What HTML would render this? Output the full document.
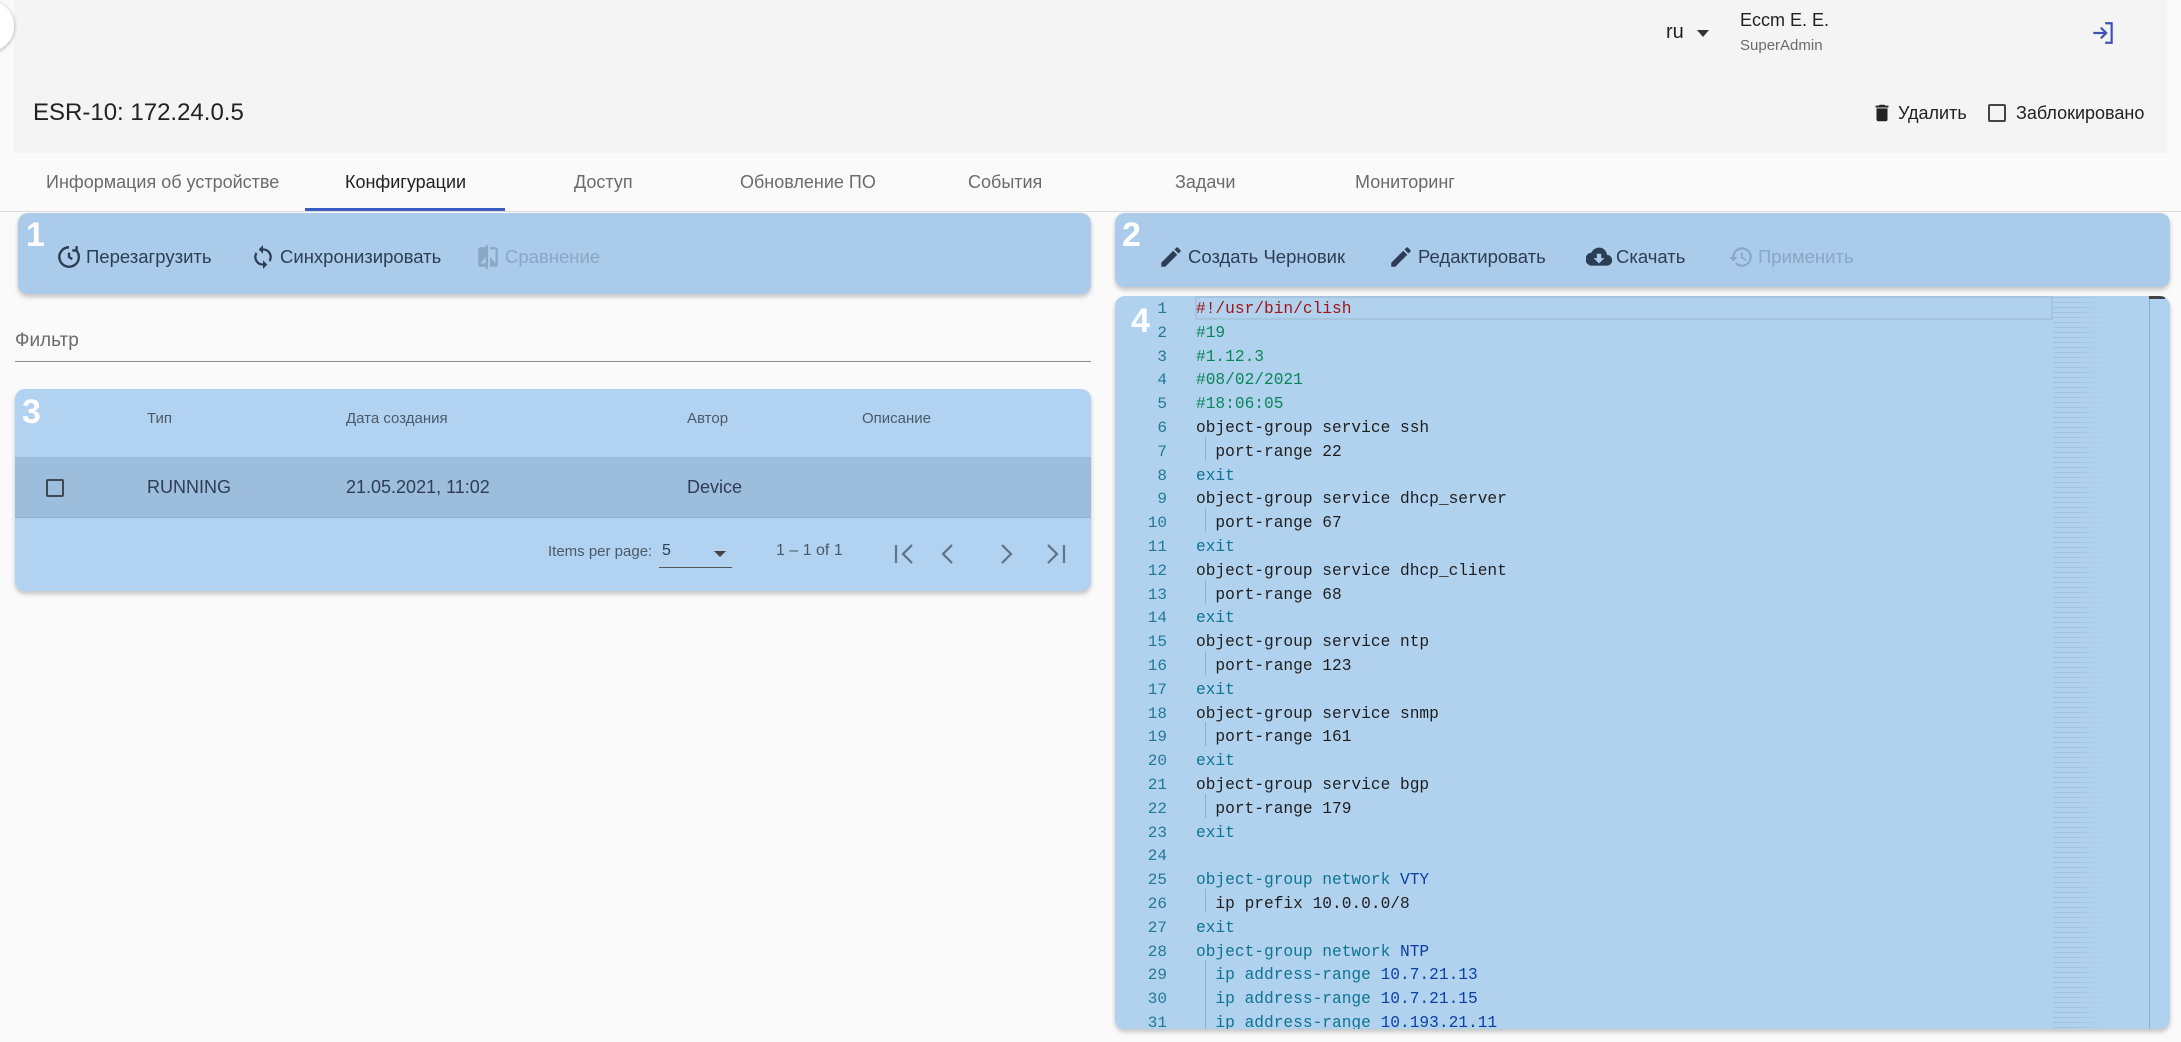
<!DOCTYPE html>
<html><head><meta charset="utf-8"><style>
*{box-sizing:border-box;margin:0;padding:0}
body{width:2181px;height:1042px;background:#fafafa;font-family:"Liberation Sans",sans-serif;position:relative;overflow:hidden;color:#212121}
.abs{position:absolute;white-space:nowrap}
.hdr{position:absolute;left:14px;top:0;width:2153px;height:153px;background:#f4f4f4}
.tab{position:absolute;top:172px;font-size:18px;color:#6b6b6b}
.panel{position:absolute;background:#abcbea;border-radius:10px;box-shadow:0 3px 5px rgba(0,0,0,.22)}
.num{position:absolute;color:#fff;font-weight:bold;font-size:34px;line-height:1}
.btn{position:absolute;top:244px;font-size:18.5px;color:#2c3e55;display:flex;align-items:center;gap:4px}
.btn svg{width:26px;height:26px}
.dis{color:#8aa7c4}
.th{position:absolute;top:410px;font-size:15px;color:#4a5a6a}
.td{position:absolute;top:477px;font-size:18px;color:#2c3e55}
.code{position:absolute;left:1115px;top:296px;width:1055px;height:733px;background:#b1d2ef;border-radius:10px;box-shadow:0 3px 5px rgba(0,0,0,.22);overflow:hidden}
.ln{position:absolute;left:0;width:52px;text-align:right;font-family:"Liberation Mono",monospace;font-size:16px;color:#237893;line-height:24px;margin-top:1px}
.cl{position:absolute;left:81px;font-family:"Liberation Mono",monospace;font-size:16.2px;color:#1e1e1e;white-space:pre;line-height:24px;margin-top:1px}
.g{color:#098658}.t{color:#0e7490}.n{color:#0b3fa0}.r{color:#a31515}
.ig{position:absolute;left:90px;width:1px;height:24px;background:#8fb0cc}
</style></head><body>
<div class="hdr"></div>
<div class="abs" style="left:-38px;top:0;width:52px;height:52px;border-radius:50%;background:#fff;box-shadow:0 1px 4px rgba(0,0,0,.3)"></div>
<div class="abs" style="left:33px;top:99px;font-size:24px;color:#222">ESR-10: 172.24.0.5</div>
<div class="abs" style="left:1666px;top:21px;font-size:20px;color:#222">ru</div>
<div class="abs" style="left:1697px;top:30px;width:0;height:0;border-left:6px solid transparent;border-right:6px solid transparent;border-top:7px solid #333"></div>
<div class="abs" style="left:1740px;top:10px;font-size:18px;color:#222">Еccm Е. Е.</div>
<div class="abs" style="left:1740px;top:37px;font-size:15px;color:#6b6b6b">SuperAdmin</div>
<svg class="abs" style="left:2090px;top:20px" width="26" height="26" viewBox="0 0 24 24"><path d="M10 17l5-5-5-5M15 12H3M14 3h6v18h-6" fill="none" stroke="#3f51b5" stroke-width="2"/></svg>
<svg class="abs" style="left:1871px;top:100px" width="22" height="26" viewBox="0 0 24 24"><path d="M6 19c0 1.1.9 2 2 2h8a2 2 0 002-2V7H6v12zM19 4h-3.5l-1-1h-5l-1 1H5v2h14V4z" fill="#222"/></svg>
<div class="abs" style="left:1898px;top:103px;font-size:18px;color:#222">Удалить</div>
<div class="abs" style="left:1988px;top:104px;width:18px;height:18px;border:2px solid #444;border-radius:2px"></div>
<div class="abs" style="left:2016px;top:103px;font-size:18px;color:#222">Заблокировано</div>

<div class="tab" style="left:46px">Информация об устройстве</div>
<div class="tab" style="left:345px;color:#222">Конфигурации</div>
<div class="tab" style="left:574px">Доступ</div>
<div class="tab" style="left:740px">Обновление ПО</div>
<div class="tab" style="left:968px">События</div>
<div class="tab" style="left:1175px">Задачи</div>
<div class="tab" style="left:1355px">Мониторинг</div>
<div class="abs" style="left:0;top:211px;width:2181px;height:1px;background:#ddd"></div>
<div class="abs" style="left:305px;top:208px;width:200px;height:3px;background:#3b5bc4"></div>

<div class="panel" style="left:18px;top:213px;width:1073px;height:81px"></div>
<div class="num" style="left:26px;top:218px">1</div>
<div class="btn" style="left:56px"><svg viewBox="0 0 24 24"><path d="M12 3a9 9 0 106.4 2.6M19 2v4h-4M12 8v4l3 2" fill="none" stroke="#2c3e55" stroke-width="2.2"/></svg>Перезагрузить</div>
<div class="btn" style="left:250px"><svg viewBox="0 0 24 24"><path d="M12 4V1L8 5l4 4V6a6 6 0 015.2 9l1.5 1.5A8 8 0 0012 4zm0 14a6 6 0 01-5.2-9L5.3 7.5A8 8 0 0012 20v3l4-4-4-4v3z" fill="#2c3e55"/></svg>Синхронизировать</div>
<div class="btn dis" style="left:475px"><svg viewBox="0 0 24 24"><path d="M10 3H5a2 2 0 00-2 2v14a2 2 0 002 2h5v2h2V1h-2v2zm0 15H5l5-6v6zM19 3h-5v2h5v13l-5-6v9h5a2 2 0 002-2V5a2 2 0 00-2-2z" fill="#8aa7c4"/></svg>Сравнение</div>

<div class="abs" style="left:15px;top:330px;font-size:19px;color:#6b6b6b">Фильтр</div>
<div class="abs" style="left:15px;top:361px;width:1076px;height:1px;background:#8a8a8a"></div>

<div class="panel" style="left:15px;top:389px;width:1076px;height:202px;background:#b1d2f0"></div>
<div class="num" style="left:22px;top:395px">3</div>
<div class="th" style="left:147px">Тип</div>
<div class="th" style="left:346px">Дата создания</div>
<div class="th" style="left:687px">Автор</div>
<div class="th" style="left:862px">Описание</div>
<div class="abs" style="left:15px;top:457px;width:1076px;height:61px;background:#9dbddd;border-bottom:1px solid #8fb0cf"></div>
<div class="abs" style="left:46px;top:479px;width:18px;height:18px;border:2px solid #3c4a58;border-radius:2px"></div>
<div class="td" style="left:147px">RUNNING</div>
<div class="td" style="left:346px">21.05.2021, 11:02</div>
<div class="td" style="left:687px">Device</div>
<div class="abs" style="left:548px;top:543px;font-size:15px;color:#4a5a6a">Items per page:</div>
<div class="abs" style="left:662px;top:542px;font-size:16px;color:#2c3e55">5</div>
<div class="abs" style="left:714px;top:551px;border-left:6px solid transparent;border-right:6px solid transparent;border-top:6px solid #444"></div>
<div class="abs" style="left:659px;top:567px;width:73px;height:1px;background:#555"></div>
<div class="abs" style="left:776px;top:542px;font-size:16px;color:#4a5a6a">1 – 1 of 1</div>
<svg class="abs" style="left:890px;top:540px" width="180" height="28" viewBox="0 0 180 28"><g fill="none" stroke="#5f7386" stroke-width="2.2"><path d="M6 5v18M22 5l-9 9 9 9M62 5l-9 9 9 9M112 5l9 9-9 9M158 5l9 9-9 9M174 5v18"/></g></svg>

<div class="panel" style="left:1115px;top:213px;width:1055px;height:74px"></div>
<div class="num" style="left:1122px;top:218px">2</div>
<div class="btn" style="left:1158px"><svg viewBox="0 0 24 24"><path d="M3 17.3V21h3.7L17.8 9.9l-3.7-3.7L3 17.3zM20.7 7a1 1 0 000-1.4l-2.3-2.3a1 1 0 00-1.4 0l-1.8 1.8 3.7 3.7L20.7 7z" fill="#2c3e55"/></svg>Создать Черновик</div>
<div class="btn" style="left:1388px"><svg viewBox="0 0 24 24"><path d="M3 17.3V21h3.7L17.8 9.9l-3.7-3.7L3 17.3zM20.7 7a1 1 0 000-1.4l-2.3-2.3a1 1 0 00-1.4 0l-1.8 1.8 3.7 3.7L20.7 7z" fill="#2c3e55"/></svg>Редактировать</div>
<div class="btn" style="left:1586px"><svg viewBox="0 0 24 24"><path d="M19.4 10A7.5 7.5 0 005 8 6 6 0 006 20h13a5 5 0 00.4-10zM17 13l-5 5-5-5h3V9h4v4h3z" fill="#2c3e55"/></svg>Скачать</div>
<div class="btn dis" style="left:1728px"><svg viewBox="0 0 24 24"><path d="M13 3a9 9 0 00-9 9H1l4 4 4-4H6a7 7 0 112 5l-1.4 1.4A9 9 0 1013 3zm-1 5v5l4.3 2.5.7-1.2-3.5-2.1V8H12z" fill="#8aa7c4"/></svg>Применить</div>

<div class="code">
<div class="abs" style="left:80px;top:0;width:858px;height:24px;border:2px solid #a6c4de"></div>
<div class="abs" style="left:938px;top:0;width:96px;height:733px;background:repeating-linear-gradient(#b1d2ef 0 1px,#9fb8cf 1px 2px,#b1d2ef 2px 5px);opacity:.7;-webkit-mask:linear-gradient(90deg,#000 20%,transparent 55%)"></div>
<div class="abs" style="left:1034px;top:0;width:1px;height:733px;background:#8fb0cc"></div>
<div class="abs" style="left:1034px;top:0;width:16px;height:3px;background:#444"></div>
<div class="num" style="left:16px;top:8px">4</div>
<div class="ln" style="top:0">1</div><div class="cl r" style="top:0">#!/usr/bin/clish</div>
<div class="ln" style="top:24px">2</div><div class="cl g" style="top:24px">#19</div>
<div class="ln" style="top:48px">3</div><div class="cl g" style="top:48px">#1.12.3</div>
<div class="ln" style="top:71px">4</div><div class="cl g" style="top:71px">#08/02/2021</div>
<div class="ln" style="top:95px">5</div><div class="cl g" style="top:95px">#18:06:05</div>
<div class="ln" style="top:119px">6</div><div class="cl" style="top:119px">object-group service ssh</div>
<div class="ln" style="top:143px">7</div><div class="ig" style="top:141px"></div><div class="cl" style="top:143px">  port-range 22</div>
<div class="ln" style="top:167px">8</div><div class="cl t" style="top:167px">exit</div>
<div class="ln" style="top:190px">9</div><div class="cl" style="top:190px">object-group service dhcp_server</div>
<div class="ln" style="top:214px">10</div><div class="ig" style="top:212px"></div><div class="cl" style="top:214px">  port-range 67</div>
<div class="ln" style="top:238px">11</div><div class="cl t" style="top:238px">exit</div>
<div class="ln" style="top:262px">12</div><div class="cl" style="top:262px">object-group service dhcp_client</div>
<div class="ln" style="top:286px">13</div><div class="ig" style="top:284px"></div><div class="cl" style="top:286px">  port-range 68</div>
<div class="ln" style="top:309px">14</div><div class="cl t" style="top:309px">exit</div>
<div class="ln" style="top:333px">15</div><div class="cl" style="top:333px">object-group service ntp</div>
<div class="ln" style="top:357px">16</div><div class="ig" style="top:355px"></div><div class="cl" style="top:357px">  port-range 123</div>
<div class="ln" style="top:381px">17</div><div class="cl t" style="top:381px">exit</div>
<div class="ln" style="top:405px">18</div><div class="cl" style="top:405px">object-group service snmp</div>
<div class="ln" style="top:428px">19</div><div class="ig" style="top:426px"></div><div class="cl" style="top:428px">  port-range 161</div>
<div class="ln" style="top:452px">20</div><div class="cl t" style="top:452px">exit</div>
<div class="ln" style="top:476px">21</div><div class="cl" style="top:476px">object-group service bgp</div>
<div class="ln" style="top:500px">22</div><div class="ig" style="top:498px"></div><div class="cl" style="top:500px">  port-range 179</div>
<div class="ln" style="top:524px">23</div><div class="cl t" style="top:524px">exit</div>
<div class="ln" style="top:547px">24</div>
<div class="ln" style="top:571px">25</div><div class="cl t" style="top:571px">object-group network <span class="n">VTY</span></div>
<div class="ln" style="top:595px">26</div><div class="ig" style="top:593px"></div><div class="cl" style="top:595px">  ip prefix 10.0.0.0/8</div>
<div class="ln" style="top:619px">27</div><div class="cl t" style="top:619px">exit</div>
<div class="ln" style="top:643px">28</div><div class="cl t" style="top:643px">object-group network <span class="n">NTP</span></div>
<div class="ln" style="top:666px">29</div><div class="ig" style="top:664px"></div><div class="cl t" style="top:666px">  ip address-range <span class="n">10.7.21.13</span></div>
<div class="ln" style="top:690px">30</div><div class="ig" style="top:688px"></div><div class="cl t" style="top:690px">  ip address-range <span class="n">10.7.21.15</span></div>
<div class="ln" style="top:714px">31</div><div class="ig" style="top:712px"></div><div class="cl t" style="top:714px">  ip address-range <span class="n">10.193.21.11</span></div>
</div>
</body></html>
